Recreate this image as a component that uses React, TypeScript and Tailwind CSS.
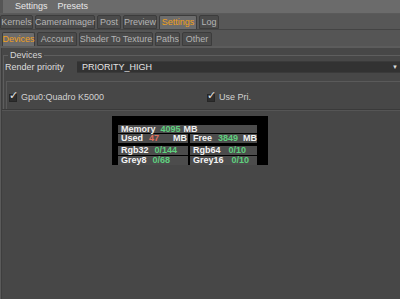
import React from "react";

const font = { fontFamily: '"Liberation Sans", Arial, sans-serif' };

function Tab({ label, active, w }: { label: string; active?: boolean; w: string }) {
  return (
    <div
      className={`${w} h-full flex items-center justify-center whitespace-nowrap border border-[#3c3c3c] rounded-t-[2px] ${
        active ? "bg-[#6c6c6c] text-[#f0a020] border-b-0" : "bg-[#4b4b4b] text-[#b4b4b4]"
      }`}
    >
      {label}
    </div>
  );
}

function Check({ label }: { label: string }) {
  return (
    <div className="flex items-center gap-[4px]">
      <div className="w-[8px] h-[8px] bg-[#2e2e2e] border border-[#262626] relative">
        <span className="absolute left-[-1px] top-[-5px] text-[11px] leading-none text-[#e6e6e6]">✓</span>
      </div>
      <span className="text-[#d2d2d2]">{label}</span>
    </div>
  );
}

function Cell({ k, v, u, vc = "text-[#5fd07f]", w, gap }: { k: string; v: string; u?: string; vc?: string; w: string; gap: string }) {
  return (
    <div className={`${w} h-full bg-[#4c4c4c] flex items-center pl-[3px] font-bold`}>
      <span className="text-[#f4f4f4]">{k}</span>
      <span className={`${vc} ml-[6px] ${gap}`}>{v}</span>
      {u && <span className="text-[#f4f4f4]">{u}</span>}
    </div>
  );
}

export default function App() {
  return (
    <div className="w-[400px] h-[299px] bg-[#474747] overflow-hidden text-[9px] leading-none" style={font}>
      {/* menu bar */}
      <div className="h-[14px] bg-[#6b6b6b] flex items-center text-[#e8e8e8] border-b border-[#5a5a5a]">
        <div className="w-[3px] h-full bg-[#555]" />
        <span className="ml-[12px]">Settings</span>
        <span className="ml-[10px]">Presets</span>
      </div>
      {/* tab row 1 */}
      <div className="h-[16px] bg-[#575757] flex items-end gap-[2px] pt-[1px] border-b border-[#444]">
        <Tab label="Kernels" w="w-[33px]" />
        <Tab label="CameraImager" w="w-[60px]" />
        <Tab label="Post" w="w-[24px]" />
        <Tab label="Preview" w="w-[34px]" />
        <Tab label="Settings" active w="w-[38px]" />
        <Tab label="Log" w="w-[20px]" />
      </div>
      {/* tab row 2 */}
      <div className="h-[18px] bg-[#555] flex items-end gap-[2px] pl-[2px] pt-[2px] border-b-2 border-[#5c5c5c]">
        <Tab label="Devices" active w="w-[33px]" />
        <Tab label="Account" w="w-[40px]" />
        <Tab label="Shader To Texture" w="w-[74px]" />
        <Tab label="Paths" w="w-[25px]" />
        <Tab label="Other" w="w-[30px]" />
      </div>
      {/* content */}
      <div className="flex h-full">
        <div className="w-[1px] bg-[#5a5a5a]" />
        <div className="w-[1px] bg-[#3e3e3e]" />
        <div className="flex-1 flex flex-col pt-[2px]">
          <div className="relative border-t border-l border-[#5e5e5e] mt-[5px] ml-[1px]">
            <span className="absolute left-[4px] top-[-5px] bg-[#474747] px-[2px] text-[#d8d8d8]">Devices</span>
            <div className="flex items-center mt-[5px] h-[12px]">
              <span className="ml-[1px] w-[72px] text-[#dcdcdc]">Render priority</span>
              <div className="flex-1 h-[12px] bg-[#323232] flex items-center pl-[5px] pr-[2px] text-[#e4e4e4] border-y border-[#3a3a3a]">
                <span className="flex-1">PRIORITY_HIGH</span>
                <span className="text-[6px] text-[#ddd]">▼</span>
              </div>
            </div>
            <div className="mt-[8px] h-[28px] border-t border-l border-[#5a5a5a] ml-[2px] flex items-start pt-[11px] pl-[2px]">
              <div className="w-[198px]">
                <Check label="Gpu0:Quadro K5000" />
              </div>
              <Check label="Use Pri." />
            </div>
          </div>
          <div className="h-[1px] bg-[#3a3a3a]" />
          <div className="h-[1px] bg-[#555]" />
          <div className="flex justify-start pl-[110px] mt-[5px]">
            <div className="w-[156px] h-[49px] bg-black pt-[9px] pl-[6px] text-[#f0f0f0]">
              <div className="w-[139px] flex flex-col gap-[1px]">
                <div className="h-[8px] bg-[#4c4c4c] flex items-center pl-[3px] font-bold">
                  <span>Memory</span>
                  <span className="text-[#5fd07f] ml-[5px]">4095</span>
                  <span className="ml-[3px]">MB</span>
                </div>
                <div className="h-[9px] flex gap-[2px]">
                  <Cell k="Used" v="47" u="MB" vc="text-[#e0705c]" w="w-[70px]" gap="mr-[14px]" />
                  <Cell k="Free" v="3849" u="MB" w="w-[67px]" gap="mr-[5px]" />
                </div>
                <div className="h-[1px]" />
                <div className="h-[9px] flex gap-[2px]">
                  <Cell k="Rgb32" v="0/144" w="w-[70px]" gap="" />
                  <Cell k="Rgb64" v="0/10" w="w-[67px]" gap="ml-[8px]" />
                </div>
                <div className="h-[9px] flex gap-[2px]">
                  <Cell k="Grey8" v="0/68" w="w-[70px]" gap="" />
                  <Cell k="Grey16" v="0/10" w="w-[67px]" gap="ml-[8px]" />
                </div>
              </div>
            </div>
          </div>
        </div>
      </div>
    </div>
  );
}
